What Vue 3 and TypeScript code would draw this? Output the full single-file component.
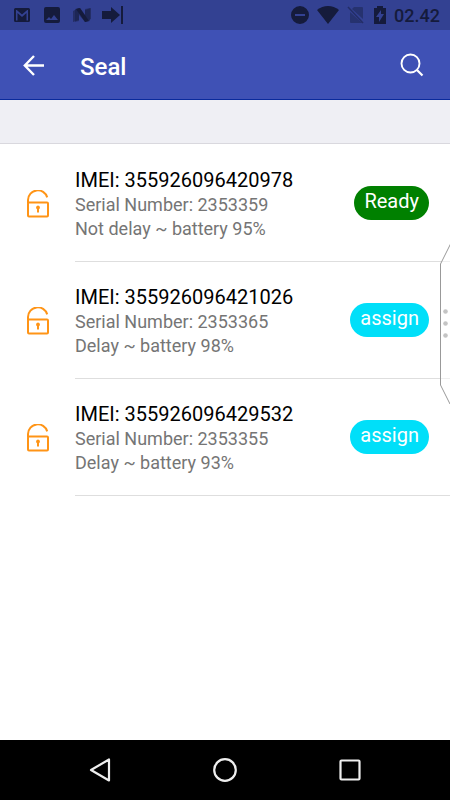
<script setup lang="ts">
interface Seal {
  imei: string
  serial: string
  status: string
  action: string
  ready: boolean
}

const seals: Seal[] = [
  { imei: '355926096420978', serial: '2353359', status: 'Not delay ~ battery 95%', action: 'Ready', ready: true },
  { imei: '355926096421026', serial: '2353365', status: 'Delay ~ battery 98%', action: 'assign', ready: false },
  { imei: '355926096429532', serial: '2353355', status: 'Delay ~ battery 93%', action: 'assign', ready: false },
]
</script>

<template>
  <div class="screen">
    <div class="status-bar">
      <div class="status-group">
        <svg class="status-icon" viewBox="0 0 20 20">
          <path fill-rule="evenodd" d="M3.500 3h13A1.500 1.500 0 0 1 18 4.500v11a1.500 1.500 0 0 1-1.500 1.500h-13A1.500 1.500 0 0 1 2 15.500v-11A1.500 1.500 0 0 1 3.500 3zM4 5v10.500h1.500V8l4.500 4 4.500-4v7.500H16V5h-.8L10 9.500 4.800 5z" />
        </svg>
        <svg class="status-icon" viewBox="0 0 20 20">
          <path fill-rule="evenodd" d="M4 2h12a2 2 0 0 1 2 2v12a2 2 0 0 1-2 2H4a2 2 0 0 1-2-2V4a2 2 0 0 1 2-2zM4 15h12l-4-5-3 4-2-2z" />
        </svg>
        <svg class="status-icon" viewBox="0 0 20 20">
          <path opacity=".5" d="M1 6l6-3v12l-6 2zM13 5l6-2v11l-6 3z" />
          <path d="M3 4l5-1 5 7V4l5-1v13l-5 1-6-7v6l-4 1z" opacity=".4" />
          <path d="M4 4l4-1 9 13-4 1z" />
        </svg>
        <svg class="status-icon wide" viewBox="0 0 24 20">
          <path d="M0 6h9V2l9 8-9 8v-4H0zM19 1h2v18h-2z" />
        </svg>
      </div>
      <div class="status-group right">
        <svg class="status-icon" viewBox="0 0 20 20">
          <path fill-rule="evenodd" d="M10 1a9 9 0 1 1 0 18 9 9 0 0 1 0-18zM5 9v2h10V9z" />
        </svg>
        <svg class="status-icon wifi" viewBox="0 0 22 20">
          <path d="M11 19L0 5Q5 1 11 1t11 4z" />
        </svg>
        <svg class="status-icon" viewBox="0 0 20 20">
          <path opacity=".4" d="M8 2h8a1 1 0 0 1 1 1v11L6 4zM4 7l12 11H5a1 1 0 0 1-1-1z" />
          <path d="M2 2l15 16" stroke="currentColor" stroke-width="1.500" opacity=".5" />
        </svg>
        <svg class="status-icon battery" viewBox="0 0 14 20">
          <path fill-rule="evenodd" d="M4 1h6v2h3v16H1V3h3zM8 5l-5 7h3v5l5-8H8z" />
        </svg>
        <span class="clock">02.42</span>
      </div>
    </div>

    <header class="app-bar">
      <button class="icon-button" type="button" aria-label="Back">
        <svg viewBox="0 0 24 24" fill="none" stroke="currentColor" stroke-width="2.400">
          <path d="M22 12.500H3M12 3L2.800 12.500l9.200 9.500" />
        </svg>
      </button>
      <h1 class="title">Seal</h1>
      <button class="icon-button" type="button" aria-label="Search">
        <svg viewBox="0 0 24 24" fill="none" stroke="currentColor" stroke-width="1.900">
          <circle cx="10.500" cy="10.500" r="9" />
          <path d="M17 17l5.500 5.500" stroke-width="2.200" />
        </svg>
      </button>
    </header>
    <div class="band"></div>

    <main class="content">
      <ul class="seal-list">
        <li v-for="seal in seals" :key="seal.imei" class="seal">
          <svg class="lock" viewBox="0 0 22 28" fill="none" stroke="currentColor" stroke-width="2">
            <rect x="1" y="12.500" width="20" height="14" rx="1" />
            <path d="M1 13v-3a9.800 9.800 0 0 1 19.200-2.600" />
            <path fill="currentColor" stroke="none" d="M11 15.500a2 2 0 0 1 1 3.700v3.300h-2v-3.300a2 2 0 0 1 1-3.700z" />
          </svg>
          <div class="details">
            <div class="text">
              <h2>IMEI: {{ seal.imei }}</h2>
              <p>Serial Number: {{ seal.serial }}</p>
              <p>{{ seal.status }}</p>
            </div>
            <button class="pill" :class="{ ready: seal.ready }" type="button">{{ seal.action }}</button>
          </div>
        </li>
      </ul>
    </main>

    <svg class="edge-handle" viewBox="0 0 10 160">
      <path d="M11 -1L.5 20v121L11 162" fill="#fff" fill-opacity=".5" stroke="#999" />
      <g fill="#c4c4c4">
        <circle cx="5.500" cy="67.500" r="2.300" />
        <circle cx="5.500" cy="79.500" r="2.300" />
        <circle cx="5.500" cy="91.500" r="2.300" />
      </g>
    </svg>

    <nav class="nav-bar">
      <button class="nav-button" type="button" aria-label="Back">
        <svg viewBox="0 0 26 26"><path d="M22 2.500v21L4 13z" /></svg>
      </button>
      <button class="nav-button" type="button" aria-label="Home">
        <svg viewBox="0 0 26 26"><circle cx="13" cy="13" r="10.800" /></svg>
      </button>
      <button class="nav-button" type="button" aria-label="Recent apps">
        <svg viewBox="0 0 26 26"><rect x="3.500" y="3.500" width="19" height="19" rx="1" /></svg>
      </button>
    </nav>
  </div>
</template>

<style>
body {
  margin: 0;
}
</style>

<style scoped>
.screen {
  position: relative;
  display: flex;
  flex-direction: column;
  min-height: 100vh;
  background: #fff;
  font-family: Roboto, "Liberation Sans", sans-serif;
}

button {
  border: 0;
  padding: 0;
  background: none;
  color: inherit;
  font: inherit;
}

.status-bar {
  display: flex;
  justify-content: space-between;
  align-items: center;
  height: 30px;
  padding: 0 10px 0 12px;
  background: #334192;
  color: #151b3c;
}

.status-group {
  display: flex;
  align-items: center;
  gap: 10px;
}

.status-group.right {
  gap: 7px;
}

.status-icon {
  width: 20px;
  height: 20px;
  fill: currentColor;
}

.status-icon.wide {
  width: 24px;
}

.status-icon.wifi {
  width: 22px;
}

.status-icon.battery {
  width: 14px;
}

.clock {
  padding-top: 2px;
  font-size: 18px;
  font-weight: 500;
  line-height: 20px;
}

.app-bar {
  display: flex;
  align-items: center;
  height: 70px;
  box-sizing: border-box;
  padding: 0 26px 0 22px;
  border-bottom: 1px solid #0a2a9c;
  background: #3f51b5;
  color: #fff;
}

.icon-button {
  width: 24px;
  height: 24px;
}

.icon-button svg,
.nav-button svg {
  display: block;
  width: 100%;
  height: 100%;
}

.title {
  flex: 1;
  margin: 0 0 0 34px;
  padding-top: 4px;
  font-size: 24px;
  font-weight: 500;
  line-height: 32px;
}

.band {
  height: 43px;
  border-bottom: 1px solid #d9d8de;
  background: #efeff4;
}

.content {
  flex: 1;
}

.seal-list {
  margin: 0;
  padding: 1px 0 0;
  list-style: none;
}

.seal {
  display: flex;
  align-items: center;
  padding-left: 27px;
}

.lock {
  width: 22px;
  height: 28px;
  margin-right: 26px;
  color: #ff9416;
}

.details {
  display: flex;
  flex: 1;
  justify-content: space-between;
  align-items: center;
  height: 116px;
  padding-right: 21px;
  border-bottom: 1px solid #dedede;
}

.text {
  padding-top: 3px;
}

.text h2 {
  margin: 0;
  color: #000;
  font-size: 20px;
  font-weight: 400;
  line-height: 25px;
}

.text p {
  margin: 0;
  color: #757575;
  font-size: 18px;
  line-height: 24px;
}

.pill {
  height: 34px;
  padding: 0 10px 4px;
  border-radius: 17px;
  background: #00dff9;
  color: #fff;
  font-size: 20px;
  line-height: 30px;
}

.pill.ready {
  background: #008000;
}

.edge-handle {
  position: absolute;
  top: 244px;
  right: 0;
  width: 10px;
  height: 160px;
}

.nav-bar {
  display: flex;
  justify-content: center;
  align-items: center;
  gap: 99px;
  height: 60px;
  background: #000;
  color: #eee;
}

.nav-button {
  width: 26px;
  height: 26px;
}

.nav-button svg {
  fill: none;
  stroke: currentColor;
  stroke-width: 2.200;
  stroke-linejoin: round;
}
</style>
